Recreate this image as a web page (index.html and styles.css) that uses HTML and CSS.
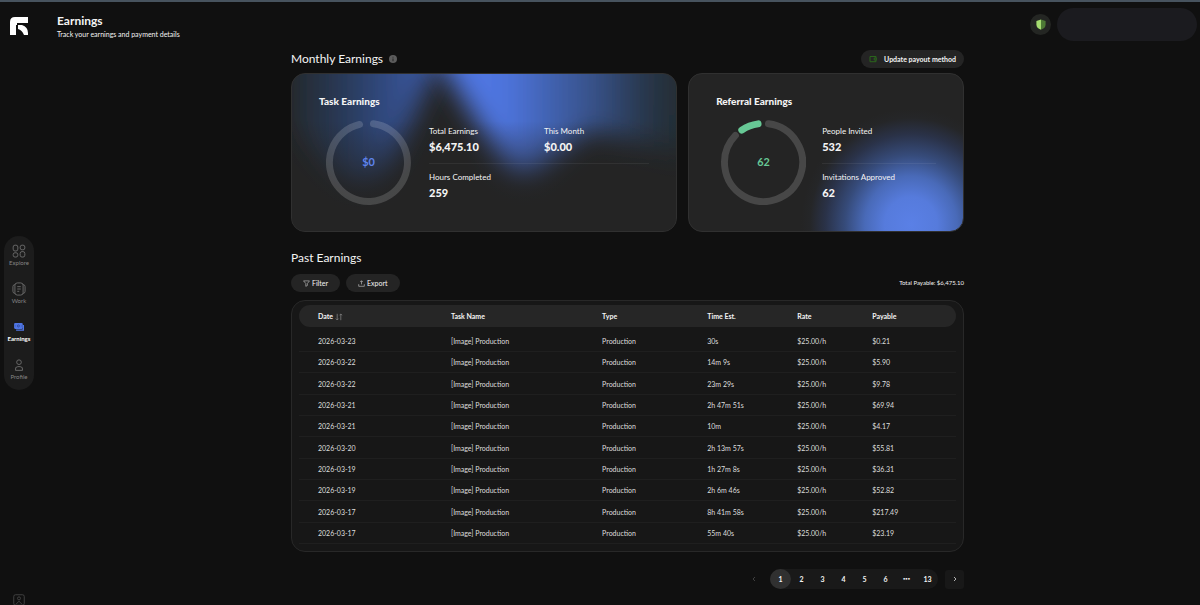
FILE: index.html
```html
<!DOCTYPE html>
<html lang="en">
<head>
<meta charset="utf-8">
<meta name="viewport" content="width=device-width, initial-scale=1">
<title>Earnings</title>
<link rel="stylesheet" href="styles.css">
</head>
<body>
<div class="app">
  <aside class="sidebar">
    <a class="logo" href="#" aria-label="Home">
      <svg viewBox="0 0 18 18" width="18" height="18"><path d="M5 0H18V6H7V8L6 8V18H0V5Q0 0 5 0Z" fill="#fff"/><path d="M8 8H12Q18 10 18 16V18H14Q12 13 8 12Z" fill="#fff"/></svg>
    </a>
    <nav class="nav" aria-label="Main">
      <a class="nav-item" href="#">
        <svg viewBox="0 0 12 12" class="icon"><rect x="1" y="1" width="4" height="5" rx="1.6"/><rect x="7" y="1" width="4" height="4" rx="1.6"/><rect x="1" y="7.5" width="4" height="3.7" rx="1.6"/><rect x="7" y="6.5" width="4" height="4.7" rx="1.6"/></svg>
        <span>Explore</span>
      </a>
      <a class="nav-item" href="#">
        <svg viewBox="0 0 12 12" class="icon"><rect x="2.5" y=".8" width="7" height="10.4" rx="2"/><path d="M2.5 2.2Q.8 2.4.8 4V8Q.8 9.6 2.5 9.8M9.5 2.2Q11.2 2.4 11.2 4V8Q11.2 9.6 9.5 9.8M4.5 4H7.5M4.5 6H7.5M4.5 8H6.2"/></svg>
        <span>Work</span>
      </a>
      <a class="nav-item nav-item-active" href="#" aria-current="page">
        <svg viewBox="0 0 12 12" class="icon"><rect x="1.8" y="2.5" width="7.4" height="5.2" rx="1" fill="#4f75e4" stroke="none"/><path d="M9.7 4.2V8.7H3.5" stroke="#4f75e4" stroke-width="1.2"/><circle cx="5.5" cy="5.1" r=".9" stroke="#263d88" stroke-width=".6"/><path d="M2.9 5.1H3.3M7.7 5.1H8.1" stroke="#263d88"/></svg>
        <span>Earnings</span>
      </a>
      <a class="nav-item" href="#">
        <svg viewBox="0 0 12 12" class="icon"><circle cx="6" cy="3.6" r="2"/><path d="M3 10.6Q2.4 7.4 5 7.4H7Q9.6 7.4 9 10.6Z"/></svg>
        <span>Profile</span>
      </a>
    </nav>
    <button class="support" type="button" aria-label="Account">
      <svg viewBox="0 0 12 12" class="icon"><rect x="1.5" y="1.5" width="9" height="9" rx="1.5"/><circle cx="6" cy="4.6" r="1.3"/><path d="M3.3 9.8L6 7L8.7 9.8"/></svg>
    </button>
  </aside>

  <div class="page">
    <header class="topbar">
      <div>
        <h1 class="title">Earnings</h1>
        <p class="subtitle">Track your earnings and payment details</p>
      </div>
      <div class="account">
        <button class="shield" type="button" aria-label="Security">
          <svg viewBox="0 0 10 11" width="10" height="11"><path d="M5 .4L9.6 2V5.4Q9.6 9 5 10.7Z" fill="#4d7a35"/><path d="M5 .4L.4 2V5.4Q.4 9 5 10.7Z" fill="#a5dc70"/></svg>
        </button>
        <button class="profile" type="button" aria-label="Profile menu"></button>
      </div>
    </header>

    <main class="content">
      <section>
        <div class="section-head">
          <h2 class="heading">Monthly Earnings
            <svg viewBox="0 0 8 8" width="8" height="8"><circle cx="4" cy="4" r="4" fill="#5c5c5c"/><path d="M4 1.8V2.6M4 3.5V6.2" stroke="#252525"/></svg>
          </h2>
          <button class="pill pill-payout" type="button">
            <svg viewBox="0 0 8 8" width="8" height="8" fill="none" stroke="#2a641c"><path d="M1 1.5H7V3M7 5V6.7H1V1.5"/><path d="M7.3 3H5.2V5H7.3Z"/></svg>
            Update payout method
          </button>
        </div>

        <div class="cards">
          <article class="card">
            <svg class="glow" viewBox="0 0 386 159" preserveAspectRatio="none" aria-hidden="true">
              <defs>
                <filter id="soft" x="-30%" y="-30%" width="160%" height="160%"><feGaussianBlur stdDeviation="13"/></filter>
                <linearGradient id="left" x1="0" x2="1"><stop offset="0" stop-color="#24405f" stop-opacity=".25"/><stop offset=".45" stop-color="#3560b8" stop-opacity=".5"/><stop offset="1" stop-color="#4b72df" stop-opacity=".85"/></linearGradient>
                <linearGradient id="right" x1="0" x2="1"><stop offset="0" stop-color="#5079e8"/><stop offset=".3" stop-color="#5079e8" stop-opacity=".95"/><stop offset=".65" stop-color="#4470cc" stop-opacity=".58"/><stop offset=".92" stop-color="#23425c" stop-opacity=".35"/></linearGradient>
                <linearGradient id="fade" x1="0" x2="0" y1="0" y2="1"><stop offset=".3" stop-color="#242424" stop-opacity="0"/><stop offset=".75" stop-color="#242424" stop-opacity=".7"/></linearGradient>
              </defs>
              <path d="M0-40H162L137 8L110 70Q90 122 58 112Q28 96 0 50Z" fill="url(#left)" filter="url(#soft)"/>
              <path d="M134-40H400V88L300 58L262 86Q230 122 210 86L156 0Z" fill="url(#right)" filter="url(#soft)"/>
              <path d="M0 0H386V159H0Z" fill="url(#fade)"/>
            </svg>
            <h3 class="card-title">Task Earnings</h3>
            <div class="card-body">
              <svg class="donut" viewBox="0 0 86 86" role="img" aria-label="$0">
                <path d="M48 3.8A39.5 39.5 0 1 1 34 4.5" class="track"/>
                <text x="43" y="47" class="donut-blue">$0</text>
              </svg>
              <dl class="stats stats-wide">
                <div class="stat"><dt>Total Earnings</dt><dd>$6,475.10</dd></div>
                <div class="stat"><dt>This Month</dt><dd>$0.00</dd></div>
                <div class="stat stat-next"><dt>Hours Completed</dt><dd>259</dd></div>
              </dl>
            </div>
          </article>

          <article class="card card-referral">
            <h3 class="card-title">Referral Earnings</h3>
            <div class="card-body">
              <svg class="donut" viewBox="0 0 86 86" role="img" aria-label="62">
                <path d="M48 3.8A39.5 39.5 0 1 1 14.6 15.6" class="track"/>
                <path d="M21 10.2A39.5 39.5 0 0 1 37.5 3.9" class="arc"/>
                <text x="43" y="47" class="donut-green">62</text>
              </svg>
              <dl class="stats">
                <div class="stat"><dt>People Invited</dt><dd>532</dd></div>
                <div class="stat stat-next"><dt>Invitations Approved</dt><dd>62</dd></div>
              </dl>
            </div>
          </article>
        </div>
      </section>

      <section class="past">
        <h2 class="heading">Past Earnings</h2>
        <div class="toolbar">
          <button class="pill" type="button">
            <svg viewBox="0 0 8 8" width="7" height="7" fill="none" stroke="#b5b5b5" stroke-width=".8"><path d="M.6 1H7.4L5 4V6.3L3.2 7.2V4Z"/></svg>
            Filter
          </button>
          <button class="pill" type="button">
            <svg viewBox="0 0 8 8" width="7" height="7" fill="none" stroke="#b5b5b5" stroke-width=".8"><path d="M4 5V1M2.5 2.3L4 .8L5.5 2.3M.8 4.8V7.2H7.2V4.8"/></svg>
            Export
          </button>
          <p class="total">Total Payable: $6,475.10</p>
        </div>

        <div class="table-box">
          <table class="table">
            <thead>
              <tr>
                <th class="col-date" scope="col">Date <svg viewBox="0 0 8 8" width="8" height="8" fill="none" stroke="#808080" stroke-width=".8"><path d="M2.2.8V7M.8 5.6L2.2 7L3.6 5.6M5.8 7.2V1M4.5 2.3L5.8 1L7.2 2.3"/></svg></th>
                <th class="col-task" scope="col">Task Name</th>
                <th class="col-type" scope="col">Type</th>
                <th class="col-time" scope="col">Time Est.</th>
                <th class="col-rate" scope="col">Rate</th>
                <th class="col-pay" scope="col">Payable</th>
              </tr>
            </thead>
            <tbody>
              <tr><td>2026-03-23</td><td>[Image] Production</td><td>Production</td><td>30s</td><td>$25.00/h</td><td>$0.21</td></tr>
              <tr><td>2026-03-22</td><td>[Image] Production</td><td>Production</td><td>14m 9s</td><td>$25.00/h</td><td>$5.90</td></tr>
              <tr><td>2026-03-22</td><td>[Image] Production</td><td>Production</td><td>23m 29s</td><td>$25.00/h</td><td>$9.78</td></tr>
              <tr><td>2026-03-21</td><td>[Image] Production</td><td>Production</td><td>2h 47m 51s</td><td>$25.00/h</td><td>$69.94</td></tr>
              <tr><td>2026-03-21</td><td>[Image] Production</td><td>Production</td><td>10m</td><td>$25.00/h</td><td>$4.17</td></tr>
              <tr><td>2026-03-20</td><td>[Image] Production</td><td>Production</td><td>2h 13m 57s</td><td>$25.00/h</td><td>$55.81</td></tr>
              <tr><td>2026-03-19</td><td>[Image] Production</td><td>Production</td><td>1h 27m 8s</td><td>$25.00/h</td><td>$36.31</td></tr>
              <tr><td>2026-03-19</td><td>[Image] Production</td><td>Production</td><td>2h 6m 46s</td><td>$25.00/h</td><td>$52.82</td></tr>
              <tr><td>2026-03-17</td><td>[Image] Production</td><td>Production</td><td>8h 41m 58s</td><td>$25.00/h</td><td>$217.49</td></tr>
              <tr><td>2026-03-17</td><td>[Image] Production</td><td>Production</td><td>55m 40s</td><td>$25.00/h</td><td>$23.19</td></tr>
            </tbody>
          </table>
        </div>

        <nav class="pager" aria-label="Pagination">
          <button class="step step-off" type="button" aria-label="Previous page" disabled><svg viewBox="0 0 6 6" width="6" height="6"><path d="M4 1L2 3L4 5"/></svg></button>
          <div class="pages">
            <button class="page-no page-current" type="button" aria-current="page">1</button>
            <button class="page-no" type="button">2</button>
            <button class="page-no" type="button">3</button>
            <button class="page-no" type="button">4</button>
            <button class="page-no" type="button">5</button>
            <button class="page-no" type="button">6</button>
            <span class="page-no page-dots">•••</span>
            <button class="page-no" type="button">13</button>
          </div>
          <button class="step" type="button" aria-label="Next page"><svg viewBox="0 0 6 6" width="6" height="6"><path d="M2 1L4 3L2 5"/></svg></button>
        </nav>
      </section>
    </main>
  </div>
</div>
</body>
</html>
```

FILE: styles.css
```css
* {
  box-sizing: border-box;
  margin: 0;
  padding: 0;
}

body {
  background: #101010;
  color: #f4f4f4;
  font-family: Lato, "Open Sans", sans-serif;
  font-size: 7px;
  line-height: 10px;
}

a {
  color: inherit;
  text-decoration: none;
}

button {
  border: 0;
  background: none;
  color: inherit;
  font: inherit;
  cursor: pointer;
}

svg {
  flex: none;
}

.app {
  display: grid;
  grid-template-columns: 55px 1fr;
  min-height: 100vh;
  border-top: 2px solid #47535e;
}

.sidebar {
  display: grid;
  grid-template-rows: 1fr auto 1fr;
  justify-items: center;
  width: 30px;
  margin-left: 4px;
}

.logo {
  margin-top: 15px;
  height: 18px;
}

.nav {
  display: flex;
  flex-direction: column;
  gap: 14px;
  width: 100%;
  margin-top: 19px;
  padding: 8px 0;
  border-radius: 15px;
  background: #1c1c1c;
}

.nav-item {
  display: flex;
  flex-direction: column;
  align-items: center;
  color: #858585;
  font-size: 6px;
}

.nav-item-active {
  color: #fff;
  font-weight: 700;
}

.icon {
  width: 14px;
  height: 14px;
  fill: none;
  stroke: #6c6c6c;
  stroke-width: .8;
}

.support {
  align-self: end;
  height: 14px;
  margin-bottom: -2px;
}

.support .icon {
  stroke: #444;
}

.topbar {
  display: flex;
  justify-content: space-between;
  padding: 6px 3px 0 2px;
}

.title {
  margin-top: 6px;
  font-size: 12px;
  line-height: 14px;
}

.subtitle {
  margin-top: 1px;
}

.account {
  display: flex;
  align-items: center;
  gap: 6px;
}

.shield {
  display: grid;
  place-items: center;
  width: 21px;
  height: 21px;
  border-radius: 50%;
  background: #242623;
}

.profile {
  width: 140px;
  height: 33px;
  border-radius: 17px;
  background: #1b1b1f;
}

.content {
  max-width: 673px;
  margin: 0 auto;
}

.heading {
  display: flex;
  align-items: center;
  gap: 6px;
  font-size: 12px;
  font-weight: 400;
  line-height: 14px;
}

.section-head {
  display: flex;
  align-items: center;
  justify-content: space-between;
  padding: 9px 0 5px;
}

.pill {
  display: flex;
  align-items: center;
  gap: 2px;
  height: 18px;
  padding: 0 12px;
  border-radius: 9px;
  background: #242424;
}

.pill-payout {
  gap: 7px;
  padding: 0 8px;
  font-weight: 700;
}

.cards {
  display: grid;
  grid-template-columns: 7fr 5fr;
  gap: 11px;
}

.card {
  position: relative;
  overflow: hidden;
  padding: 21px 27px 26px;
  border: 1px solid #303030;
  border-radius: 14px;
  background: #242424;
}

.card-referral {
  background: radial-gradient(ellipse 110px 116px at 81% 96%, #5a80e6 0%, #567bdc 24%, #496ab8 42%, #364b7a 60%, #2a3248 78%, #252628 92%, #242424 100%) #242424;
}

.glow {
  position: absolute;
  inset: 0;
  width: 100%;
  height: 100%;
}

.card-title,
.card-body {
  position: relative;
}

.card-title {
  font-size: 10px;
  font-weight: 900;
  line-height: 12px;
}

.card-body {
  display: flex;
  gap: 18px;
  margin-top: 13px;
  padding-left: 7px;
}

.card-referral .card-body {
  gap: 16px;
  padding-left: 5px;
}

.donut {
  width: 85px;
  height: 85px;
}

.track,
.arc {
  fill: none;
  stroke: #fff;
  stroke-opacity: .16;
  stroke-width: 7;
  stroke-linecap: round;
}

.arc {
  stroke: #67c895;
  stroke-opacity: 1;
}

.donut text {
  font-size: 11px;
  font-weight: 700;
  text-anchor: middle;
}

.donut-blue {
  fill: #5f84ee;
}

.donut-green {
  fill: #67c895;
}

.stats {
  display: grid;
  flex: 1;
  align-content: start;
  grid-template-columns: 1fr;
  padding-top: 6px;
}

.stats-wide {
  grid-template-columns: 115px 1fr;
}

.stat {
  height: 37px;
}

.stat dt {
  font-size: 8px;
  line-height: 10px;
}

.stat dd {
  margin-top: 4px;
  font-size: 11px;
  font-weight: 900;
  line-height: 14px;
}

.stat-next {
  grid-column: 1 / -1;
  padding-top: 8px;
  border-top: 1px solid #ffffff10;
}

.past {
  padding-top: 19px;
}

.toolbar {
  display: flex;
  align-items: center;
  gap: 6px;
  margin: 9px 0 8px;
}

.total {
  margin-left: auto;
  font-size: 6px;
}

.table-box {
  padding: 4px 7px 7px;
  border: 1px solid #282828;
  border-radius: 14px;
  background: #171717;
}

.table {
  width: 100%;
  table-layout: fixed;
  border-collapse: separate;
  border-spacing: 0;
}

.col-date { width: 133px; }
.col-task { width: 23%; }
.col-type { width: 16%; }
.col-time { width: 90px; }
.col-rate { width: 75px; }

.table th,
.table td {
  padding: 0 0 0 19px;
  text-align: left;
}

.table th {
  height: 22px;
  background: #262626;
}

.table th svg {
  vertical-align: middle;
}

.table th:first-child {
  border-radius: 11px 0 0 11px;
}

.table th:last-child {
  border-radius: 0 11px 11px 0;
}

.table td {
  height: 21px;
  border-bottom: 1px solid #1f1f1f;
  color: #dedede;
}

.table tr:nth-child(3n) td {
  height: 22px;
}

.table tbody tr:first-child td {
  height: 25px;
  padding-top: 4px;
}

.pager {
  display: flex;
  justify-content: flex-end;
  align-items: center;
  gap: 7px;
  margin-top: 17px;
}

.pages {
  display: flex;
  border-radius: 10px;
  background: #191919;
}

.page-no {
  display: grid;
  place-items: center;
  width: 21px;
  height: 20px;
  font-weight: 700;
}

.page-dots {
  font-size: 4px;
}

.page-current {
  border-radius: 50%;
  background: #303030;
}

.step {
  display: grid;
  place-items: center;
  width: 19px;
  height: 19px;
  border-radius: 3px;
  background: #181818;
}

.step-off {
  background: none;
  opacity: .3;
}

.step path {
  fill: none;
  stroke: #b0b0b0;
}
```
